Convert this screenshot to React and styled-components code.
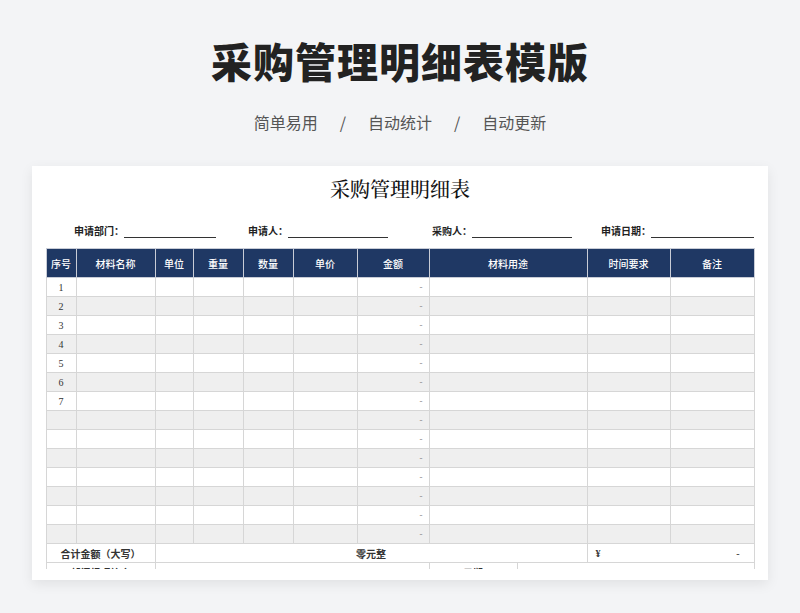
import React from "react";
import styled, { createGlobalStyle } from "styled-components";

const G = createGlobalStyle`
  body{margin:0;background:#f3f4f6;font-family:"Noto Sans CJK SC",sans-serif;}
`;
const Page = styled.div`width:800px;height:613px;overflow:hidden;display:flex;flex-direction:column;align-items:center;`;
const H1 = styled.h1`margin:34px 0 0;font-size:41px;line-height:52px;font-weight:900;color:#222;letter-spacing:1px;`;
const Sub = styled.div`margin-top:24px;font-size:16px;line-height:24px;color:#555;display:flex;gap:22px;`;
const Card = styled.div`margin-top:32px;width:736px;height:414px;background:#fff;box-shadow:0 4px 12px rgba(0,0,0,.08);overflow:hidden;display:flex;flex-direction:column;align-items:center;`;
const Title = styled.div`margin-top:10px;font-family:"Noto Serif CJK SC","Noto Sans CJK SC",serif;font-size:20px;line-height:26px;font-weight:500;color:#111;`;
const Info = styled.div`width:708px;margin-top:22px;display:flex;font-size:10px;font-weight:700;color:#222;line-height:14px;`;
const Field = styled.div`flex:0 0 ${p=>p.w}px;display:flex;justify-content:flex-end;align-items:flex-end;`;
const Line = styled.span`display:inline-block;width:${p=>p.w}px;border-bottom:1px solid #333;height:11px;`;
const Clip = styled.div`margin-top:10px;height:321px;overflow:hidden;`;
const Table = styled.table`width:708px;border-collapse:collapse;table-layout:fixed;font-family:"Liberation Serif","Noto Sans CJK SC",serif;font-size:10px;color:#333;`;
const Th = styled.th`background:#1f3864;color:#fff;font-weight:500;height:26px;border:1px solid #c8ccd6;font-family:"Noto Sans CJK SC",serif;font-size:10px;`;
const Tr = styled.tr`background:${p=>p.g?"#efefef":"#fff"};`;
const Td = styled.td`height:18px;padding:0 6px;border:1px solid #d6d6d6;text-align:${p=>p.a||"center"};color:${p=>p.c||"#333"};font-size:${p=>p.s||10}px;font-weight:${p=>p.b?700:400};font-family:${p=>p.cn?'"Noto Sans CJK SC",serif':'inherit'};`;

const widths=[30,79,38,50,50,64,72,88,70,83,84];
const heads=["序号","材料名称","单位","重量","数量","单价","金额"];

export default function App(){
  const rows=Array.from({length:14},(_,i)=>i);
  return <Page><G/>
    <H1>采购管理明细表模版</H1>
    <Sub><span>简单易用</span><span>/</span><span>自动统计</span><span>/</span><span>自动更新</span></Sub>
    <Card>
      <Title>采购管理明细表</Title>
      <Info>
        <Field w={170}>申请部门：<Line w={92}/></Field>
        <Field w={172}>申请人：<Line w={100}/></Field>
        <Field w={184}>采购人：<Line w={100}/></Field>
        <Field w={182}>申请日期：<Line w={103}/></Field>
      </Info>
      <Clip>
      <Table>
        <colgroup>{widths.map((w,i)=><col key={i} style={{width:w}}/>)}</colgroup>
        <thead><tr>{heads.map(h=><Th key={h}>{h}</Th>)}<Th colSpan={2}>材料用途</Th><Th>时间要求</Th><Th>备注</Th></tr></thead>
        <tbody>
          {rows.map(i=><Tr key={i} g={i%2===1}>
            <Td>{i<7?i+1:""}</Td><Td/><Td/><Td/><Td/><Td/>
            <Td a="right" c="#888" s={9}>-</Td><Td colSpan={2}/><Td/><Td/>
          </Tr>)}
          <Tr>
            <Td colSpan={2} cn b>合计金额（大写）</Td>
            <Td colSpan={7} cn b>零元整</Td>
            <Td colSpan={2} a="left" b style={{paddingLeft:8}}>¥<span style={{float:"right",paddingRight:8,fontWeight:400}}>-</span></Td>
          </Tr>
          <Tr>
            <Td colSpan={2} cn b>部门经理签字</Td><Td colSpan={5}/>
            <Td cn b>日期</Td><Td colSpan={3}/>
          </Tr>
        </tbody>
      </Table>
      </Clip>
    </Card>
  </Page>;
}
